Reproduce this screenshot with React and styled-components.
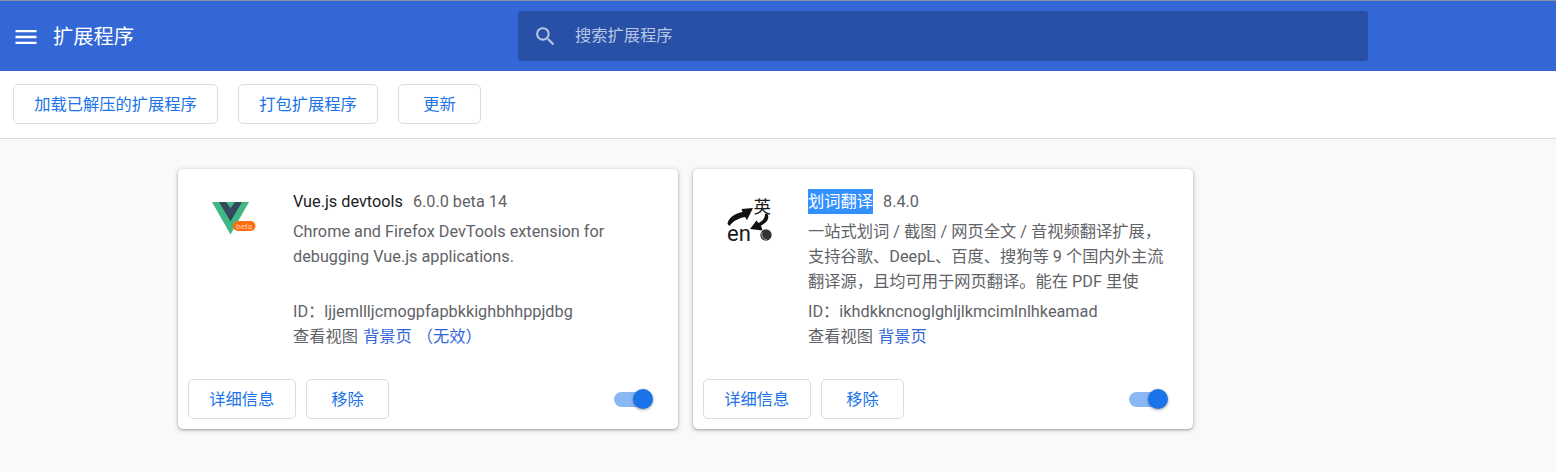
import React from "react";
import styled, { createGlobalStyle } from "styled-components";

const FONT = `Roboto, "Noto Sans CJK SC", sans-serif`;

const Global = createGlobalStyle`
  html, body { margin: 0; padding: 0; background: #f8f9fa; }
  body { font-family: ${FONT}; font-size: 16.25px; color: #5f6368; width: 1556px; height: 472px; overflow: hidden; }
  * { box-sizing: border-box; }
`;

const Page = styled.div`
  display: flex;
  flex-direction: column;
  height: 472px;
  background: #f8f9fa;
`;

const Header = styled.header`
  display: flex;
  align-items: center;
  height: 71px;
  padding-top: 1px;
  background: #3367d6;
  border-top: 1px solid #8a929e;
`;

const HeaderLeft = styled.div`
  display: flex;
  align-items: center;
  width: 518px;
  padding-left: 12px;
  gap: 13px;
`;

const Title = styled.h1`
  margin: 0;
  font-size: 20.3px;
  font-weight: 400;
  color: #fff;
  line-height: 28px;
`;

const Search = styled.div`
  display: flex;
  align-items: center;
  width: 850px;
  height: 50px;
  margin-top: -1px;
  padding-left: 15px;
  gap: 17px;
  background: #2850a7;
  border-radius: 3px;
  color: #b7c6e6;
  font-size: 16.25px;
`;

const SearchHint = styled.span`
  line-height: 48px;
  padding-bottom: 1px;
`;

const Toolbar = styled.div`
  display: flex;
  align-items: center;
  gap: 20px;
  height: 68px;
  padding: 0 13px 1px;
  background: #fff;
  border-bottom: 1px solid #dadce0;
`;

const OutlineButton = styled.button`
  height: 40px;
  min-width: 83px;
  padding: 0 20.25px 3px;
  background: #fff;
  border: 1px solid #dadce0;
  border-radius: 5px;
  color: #1a73e8;
  font-family: ${FONT};
  font-size: 16.25px;
  white-space: nowrap;
`;

const CardGrid = styled.main`
  display: flex;
  gap: 15px;
  padding: 30px 0 0 178px;
`;

const Card = styled.article`
  display: flex;
  flex-direction: column;
  justify-content: space-between;
  width: 500px;
  height: 260px;
  padding: 20px 10px 10px;
  background: #fff;
  border-radius: 5px;
  box-shadow: 0 1px 2px 0 rgba(60, 64, 67, 0.3), 0 1px 4px 1px rgba(60, 64, 67, 0.2);
`;

const CardMain = styled.div`
  display: flex;
  padding-left: 12px;
`;

const LogoSlot = styled.div`
  flex: 0 0 60px;
  height: 60px;
  margin-right: 33px;
`;

const Details = styled.div`
  width: 360px;
  line-height: 25px;
`;

const NameRow = styled.div`
  display: flex;
  gap: 10px;
  margin-bottom: 5px;
`;

const Name = styled.span`
  color: ${(p) => (p.$selected ? "#fff" : "#202124")};
  background: ${(p) => (p.$selected ? "#3390ff" : "transparent")};
`;

const Description = styled.div`
  height: 75px;
  margin-bottom: 5px;
`;

const Views = styled.div`
  display: flex;
  gap: 5px;
`;

const ViewLink = styled.a`
  color: #3367d6;
`;

const CardFooter = styled.div`
  display: flex;
  align-items: center;
  gap: 10.5px;
`;

const Toggle = styled.div`
  position: relative;
  width: 36px;
  height: 15px;
  margin-left: auto;
  margin-right: 18px;
  background: #8ab8f4;
  border-radius: 8px;
`;

const Knob = styled.span`
  position: absolute;
  top: -2.5px;
  left: 19px;
  width: 20px;
  height: 20px;
  background: #1a73e8;
  border-radius: 50%;
  box-shadow: 0 1px 3px rgba(0, 0, 0, 0.4);
`;

const MenuIcon = () => (
  <svg width="28" height="28" viewBox="0 0 24 24" fill="#fff">
    <path d="M3 18h18v-2H3v2zm0-5h18v-2H3v2zm0-5h18V6H3v2z" />
  </svg>
);

const SearchIcon = () => (
  <svg width="25" height="25" viewBox="0 0 24 24" fill="#b7c6e6">
    <path d="M15.5 14h-.79l-.28-.27A6.471 6.471 0 0 0 16 9.5 6.5 6.5 0 1 0 9.5 16c1.61 0 3.09-.59 4.23-1.57l.27.28v.79l5 4.99L20.49 19l-4.99-5zm-6 0C7.01 14 5 11.99 5 9.5S7.01 5 9.5 5 14 7.01 14 9.5 11.99 14 9.5 14z" />
  </svg>
);

const VueLogo = () => (
  <svg width="60" height="60" viewBox="0 0 60 60">
    <polygon points="12,13 49,13 30.5,45.5" fill="#41b883" />
    <polygon points="19,13 26,13 30.5,19 35,13 42,13 30.5,32.5" fill="#35495e" />
    <rect x="33" y="32" width="22.5" height="10" rx="5" fill="#ff6d14" />
    <text x="44.2" y="40" textAnchor="middle" fontSize="8" fill="#ffd0b0" fontFamily="Roboto, sans-serif">beta</text>
  </svg>
);

const TranslateLogo = () => (
  <svg width="60" height="60" viewBox="0 0 60 60">
    <text x="38.5" y="23.5" fontSize="17.5" fill="#1a1a1a" fontFamily={`"Noto Sans CJK SC", sans-serif`}>英</text>
    <text x="12" y="52" fontSize="22" fill="#1a1a1a" fontFamily="Roboto, sans-serif">en</text>
    <path d="M12.5 35 C13 29.5 19 24.5 27.5 23 L26.5 20 L38 19 L32 31 L30 28 C23 29.5 18 32 14.5 37 Z" fill="#111" />
    <path d="M52.5 25 C55 29.5 51.5 34 46 36.5 L47.5 41.5 L35 40 L41.5 31.5 L43.5 34 C47.5 32 50 29.5 50 25 Z" fill="#111" />
    <circle cx="51" cy="46" r="5.7" fill="#333" />
    <path d="M47 43 C46 47 48 50 52 51" stroke="#aaa" strokeWidth="1" fill="none" />
  </svg>
);

const extensions = [
  {
    id: "ljjemllljcmogpfapbkkighbhhppjdbg",
    name: "Vue.js devtools",
    version: "6.0.0 beta 14",
    logo: <VueLogo />,
    description: "Chrome and Firefox DevTools extension for debugging Vue.js applications.",
    views: ["背景页", "（无效）"],
  },
  {
    id: "ikhdkkncnoglghljlkmcimlnlhkeamad",
    name: "划词翻译",
    selected: true,
    version: "8.4.0",
    logo: <TranslateLogo />,
    description: "一站式划词 / 截图 / 网页全文 / 音视频翻译扩展，支持谷歌、DeepL、百度、搜狗等 9 个国内外主流翻译源，且均可用于网页翻译。能在 PDF 里使",
    views: ["背景页"],
  },
];

export default function App() {
  return (
    <Page>
      <Global />
      <Header>
        <HeaderLeft>
          <MenuIcon />
          <Title>扩展程序</Title>
        </HeaderLeft>
        <Search>
          <SearchIcon />
          <SearchHint>搜索扩展程序</SearchHint>
        </Search>
      </Header>
      <Toolbar>
        <OutlineButton>加载已解压的扩展程序</OutlineButton>
        <OutlineButton>打包扩展程序</OutlineButton>
        <OutlineButton>更新</OutlineButton>
      </Toolbar>
      <CardGrid>
        {extensions.map((ext) => (
          <Card key={ext.id}>
            <CardMain>
              <LogoSlot>{ext.logo}</LogoSlot>
              <Details>
                <NameRow>
                  <Name $selected={ext.selected}>{ext.name}</Name>
                  <span>{ext.version}</span>
                </NameRow>
                <Description>{ext.description}</Description>
                <div>ID：{ext.id}</div>
                <Views>
                  <span>查看视图</span>
                  {ext.views.map((v) => (
                    <ViewLink key={v}>{v}</ViewLink>
                  ))}
                </Views>
              </Details>
            </CardMain>
            <CardFooter>
              <OutlineButton>详细信息</OutlineButton>
              <OutlineButton>移除</OutlineButton>
              <Toggle>
                <Knob />
              </Toggle>
            </CardFooter>
          </Card>
        ))}
      </CardGrid>
    </Page>
  );
}
